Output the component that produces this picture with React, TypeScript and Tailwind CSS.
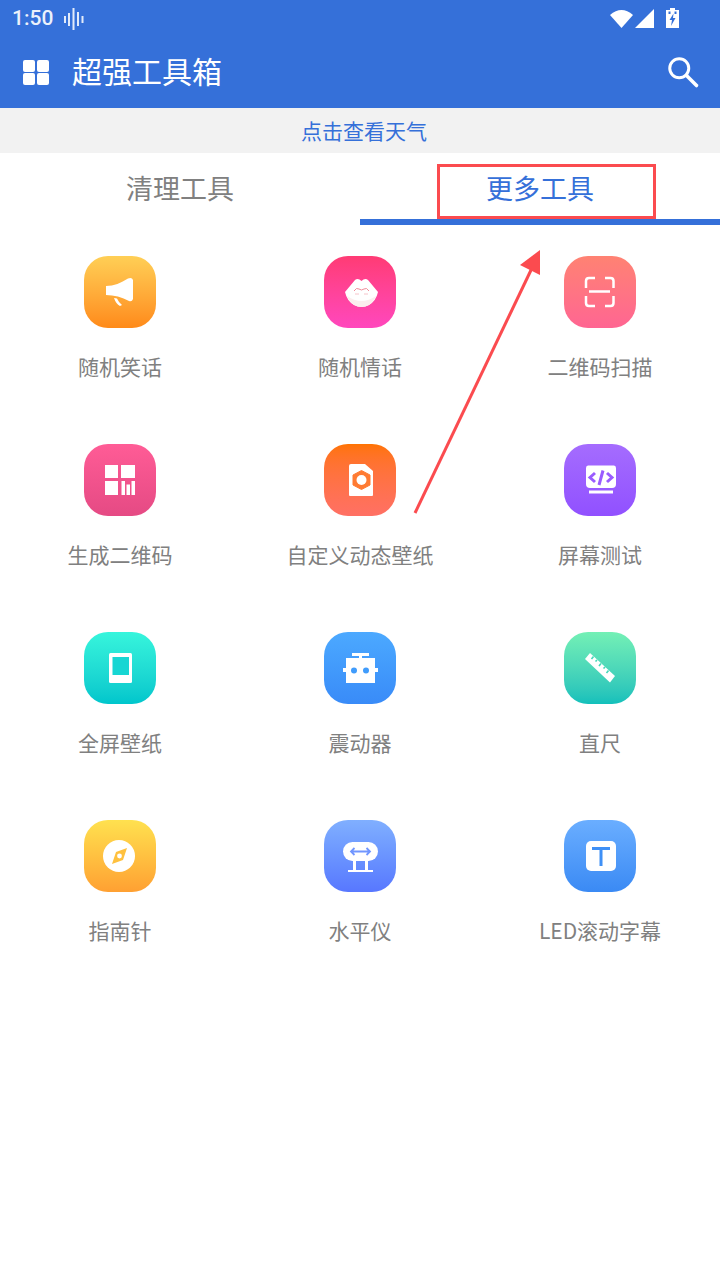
import type { ReactNode } from "react";

const CJK = "font-['Noto_Sans_CJK_SC','Noto_Sans',sans-serif]";

type Tool = {
  label: string;
  gradient: string;
  icon: ReactNode;
};

const TOOLS: Tool[] = [
  {
    label: "随机笑话",
    gradient: "bg-gradient-to-b from-[#ffcf55] to-[#ff8a18]",
    icon: (
      <>
        <path d="M22 30 C30 30 37 27 44 22.5 Q48 21 49 24 V43 Q48 46 45 45 C38 41 30 39 22 39 Z" fill="#fff" />
        <path d="M30 42 L33 42.5 Q35 47 38 49 L36 50 Q32 48 30 42 Z" fill="#fff" />
      </>
    ),
  },
  {
    label: "随机情话",
    gradient: "bg-gradient-to-b from-[#ff3b74] to-[#ff47bd]",
    icon: (
      <>
        <path d="M21 36 L31 24 Q34 21.5 37.5 25 Q41 21.5 44 24 L54 36 Q52 45 45 49 Q37.5 53 30 49 Q23 45 21 36 Z" fill="#fff" />
        <path d="M23 40 Q37.5 50 52 40 Q50 45.5 45 49 Q37.5 53 30 49 Q25 45.5 23 40 Z" fill="#fbeeee" />
        <path d="M30 35 Q32.5 31 35 33 Q37.5 35 40 33 Q42.5 31 45 35" fill="none" stroke="#f08c9a" strokeWidth="1" />
        <path d="M31 38 H35 M40 38 H44" fill="none" stroke="#f6c4ca" strokeWidth="1" />
      </>
    ),
  },
  {
    label: "二维码扫描",
    gradient: "bg-gradient-to-b from-[#ff8272] to-[#ff6592]",
    icon: (
      <path
        d="M31 22 H25 Q22 22 22 25 V32 M41 22 H46.5 Q49.5 22 49.5 25 V32 M31 50 H25 Q22 50 22 47 V40 M41 50 H46.5 Q49.5 50 49.5 47 V40 M25 35.5 H46"
        fill="none"
        stroke="#fff"
        strokeWidth="2.5"
      />
    ),
  },
  {
    label: "生成二维码",
    gradient: "bg-gradient-to-b from-[#ff5c96] to-[#e54a84]",
    icon: (
      <>
        <path d="M21 21 H34 V34 H21 Z M37 21 H51 V34 H37 Z M21 37 H34 V51 H21 Z" fill="#fff" />
        <path d="M37.5 37 H41 V51 H37.5 Z M42.5 40.5 H46 V51 H42.5 Z M47.5 37 H51 V51 H47.5 Z" fill="#fff" />
      </>
    ),
  },
  {
    label: "自定义动态壁纸",
    gradient: "bg-gradient-to-b from-[#ff7300] to-[#ff7064]",
    icon: (
      <>
        <path d="M27 20 H41 L49 27 V51 Q49 52 48 52 H26 Q25 52 25 51 V22 Q25 20 27 20 Z" fill="#fff" />
        <path d="M37.5 26.5 L46 31 V41 L37.5 45.5 L29 41 V31 Z" fill="#ff7b33" stroke="#ff7b33" strokeWidth="1" strokeLinejoin="round" />
        <circle cx="37.5" cy="36" r="5" fill="#fff" />
      </>
    ),
  },
  {
    label: "屏幕测试",
    gradient: "bg-gradient-to-b from-[#a56cfe] to-[#9150ff]",
    icon: (
      <>
        <path d="M24 21.5 H50 Q52 21.5 52 24 V40 Q52 44 48 44 H26 Q22 44 22 40 V24 Q22 21.5 24 21.5 Z" fill="#fff" />
        <path d="M25 46.5 H49 V49.5 H25 Z" fill="#fff" />
        <path d="M31 29 L26 33.5 L31 38 M43 29 L48 33.5 L43 38 M39 26.5 L35 41" fill="none" stroke="#9a5cff" strokeWidth="3" />
      </>
    ),
  },
  {
    label: "全屏壁纸",
    gradient: "bg-gradient-to-b from-[#36f5dc] to-[#00c6cc]",
    icon: (
      <>
        <rect x="25" y="21" width="23" height="30" rx="1.5" fill="#fff" />
        <rect x="28.5" y="25" width="16.5" height="18" fill="#17d6d3" />
      </>
    ),
  },
  {
    label: "震动器",
    gradient: "bg-gradient-to-b from-[#4ca9ff] to-[#398bf8]",
    icon: (
      <>
        <path d="M28 21 H45 V24 H38 V26 H51 V36 H54 V40 H51 V51 H22 V40 H19 V36 H22 V26 H35 V24 H28 Z" fill="#fff" />
        <circle cx="30" cy="38.5" r="3" fill="#409cfc" />
        <circle cx="42" cy="38.5" r="3" fill="#409cfc" />
      </>
    ),
  },
  {
    label: "直尺",
    gradient: "bg-gradient-to-b from-[#73f0b5] to-[#12c0bb]",
    icon: (
      <>
        <path d="M26 21 L51 44 L46 50.5 L21 27 Z" fill="#fff" />
        <path d="M29.5 24.5 L27.5 27 M33 28 L31.5 29.5 M37 31.5 L35 34 M41 35 L39.5 36.5 M44.5 38.5 L42.5 41" stroke="#45d8b8" strokeWidth="1.6" fill="none" />
      </>
    ),
  },
  {
    label: "指南针",
    gradient: "bg-gradient-to-b from-[#ffe14f] to-[#ffa032]",
    icon: (
      <>
        <circle cx="35" cy="36" r="16" fill="#fff" />
        <path d="M28 44 L32 32 L43 28 L39 40 Z" fill="#ffc13e" />
        <circle cx="35.5" cy="36" r="2.4" fill="#fff" />
      </>
    ),
  },
  {
    label: "水平仪",
    gradient: "bg-gradient-to-b from-[#80afff] to-[#5877ff]",
    icon: (
      <>
        <rect x="19" y="22" width="35" height="19" rx="9.5" fill="#fff" />
        <path d="M27 31.5 H46 M30.5 28 L27 31.5 L30.5 35 M42.5 28 L46 31.5 L42.5 35" fill="none" stroke="#7196ff" strokeWidth="1.8" />
        <path d="M29 40 H32 V50 H29 Z M41 40 H44 V50 H41 Z M24 50 H49 V52 H24 Z" fill="#fff" />
      </>
    ),
  },
  {
    label: "LED滚动字幕",
    gradient: "bg-gradient-to-b from-[#6aaeff] to-[#3a8af4]",
    icon: (
      <>
        <rect x="22" y="21" width="30" height="30" rx="5" fill="#fff" />
        <path d="M28 27 H46 V30 H38.5 V46 H35.5 V30 H28 Z" fill="#3f90f6" />
      </>
    ),
  },
];

function StatusBar() {
  return (
    <div className="flex h-9 items-center justify-between pl-3 pr-[41px] text-white">
      <div className="flex items-center gap-[11px]">
        <span className="font-['Roboto',sans-serif] text-[21px] font-medium leading-none opacity-90">1:50</span>
        <svg className="mt-[2px]" width="20" height="22" viewBox="0 0 20 22" aria-hidden="true">
          <path
            d="M1 8 V15 M5 5 V18 M9.5 0 V22 M14 4 V18 M18.5 8 V15"
            stroke="#fff"
            strokeOpacity="0.85"
            strokeWidth="2"
            fill="none"
          />
        </svg>
      </div>
      <div className="flex items-center gap-[11px]">
        <div className="flex items-center gap-[2px]">
          <svg width="23" height="19" viewBox="0 0 23 19" aria-hidden="true">
            <path d="M0 6 Q11.5 -4 23 6 L11.5 19 Z" fill="#fff" />
          </svg>
          <svg width="20" height="19" viewBox="0 0 20 19" aria-hidden="true">
            <path d="M19 0 V19 H0 Z" fill="#fff" />
          </svg>
        </div>
        <svg width="13" height="20" viewBox="0 0 13 20" aria-hidden="true">
          <path d="M4 0 H9 V2 H13 V20 H0 V2 H4 Z" fill="#fff" />
          <path d="M7.5 5.5 L3.5 12 H6 L5 18 L9.5 10 H7 Z" fill="#3570d9" />
          <path d="M2.5 3.5 H4.5 V6 H2.5 Z M8.5 3.5 H10.5 V6 H8.5 Z" fill="#3570d9" />
        </svg>
      </div>
    </div>
  );
}

function AppBar() {
  return (
    <div className="flex h-[72px] items-center pl-[23px] pr-[20px] text-white">
      <div className="grid grid-cols-2 gap-x-[2px] gap-y-[1px]">
        <span className="h-3 w-3 rounded-[2px] bg-white" />
        <span className="h-3 w-3 rounded-[2px] bg-white" />
        <span className="h-3 w-3 rounded-[2px] bg-white" />
        <span className="h-3 w-3 rounded-[2px] bg-white" />
      </div>
      <h1 className={`ml-[23px] flex-1 pb-1 text-[30px] font-normal leading-none ${CJK}`}>超强工具箱</h1>
      <svg width="34" height="34" viewBox="0 0 34 34" aria-hidden="true">
        <circle cx="13.25" cy="13.25" r="9.5" fill="none" stroke="#fff" strokeWidth="3" />
        <path d="M20.5 20.5 L30.5 30.5" stroke="#fff" strokeWidth="3.6" strokeLinecap="round" />
      </svg>
    </div>
  );
}

function ToolItem({ tool }: { tool: Tool }) {
  return (
    <div className="flex h-[188px] flex-col items-center">
      <div className={`h-[72px] w-[72px] rounded-[24px] ${tool.gradient}`}>
        <svg width="72" height="72" viewBox="0 0 72 72" aria-hidden="true">
          {tool.icon}
        </svg>
      </div>
      <p className={`mt-[24px] whitespace-nowrap text-[21px] leading-[28px] text-[#808080] ${CJK}`}>{tool.label}</p>
    </div>
  );
}

export default function App() {
  return (
    <div className={`relative h-[1280px] w-[720px] overflow-hidden bg-white ${CJK}`}>
      <header className="bg-[#3570d9]">
        <StatusBar />
        <AppBar />
      </header>

      <div className="flex h-[45px] items-center justify-center bg-[#f2f2f2] pl-[8px] text-[21px] text-[#3570d9]">
        点击查看天气
      </div>

      <div className="flex h-[72px]">
        <div className="flex-1 pt-[16px] text-center text-[27px] leading-[38px] text-[#808080]">清理工具</div>
        <div className="flex-1 border-b-[6px] border-[#3570d9] pt-[16px] text-center text-[27px] leading-[38px] text-[#3570d9]">
          更多工具
        </div>
      </div>

      <div className="grid grid-cols-3 pt-[31px]">
        {TOOLS.map((tool) => (
          <ToolItem key={tool.label} tool={tool} />
        ))}
      </div>

      {/* annotation drawn over the screenshot */}
      <div className="absolute left-[437px] top-[164px] h-[55px] w-[219px] border-[3px] border-[#fb4b4f]" />
      <svg className="pointer-events-none absolute left-0 top-0" width="720" height="1280" aria-hidden="true">
        <path d="M415 513 L532 268" stroke="#fb4b4f" strokeWidth="3" fill="none" />
        <path d="M540 250 L540 275 L520 265 Z" fill="#fb4b4f" />
      </svg>
    </div>
  );
}
